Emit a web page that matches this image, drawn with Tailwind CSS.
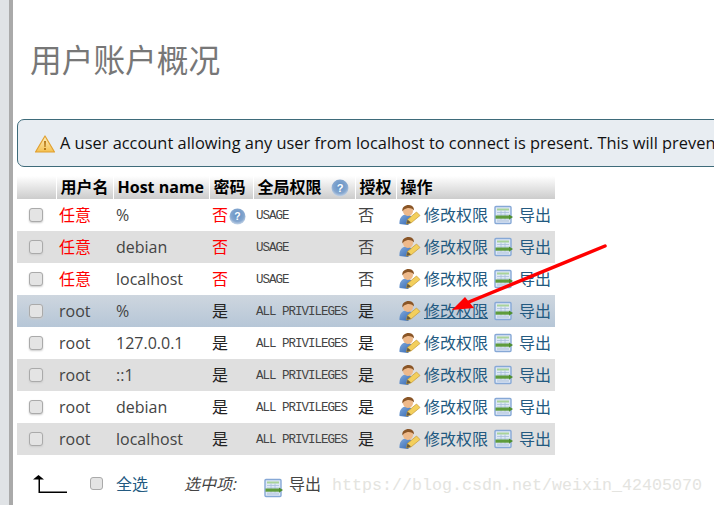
<!DOCTYPE html>
<html lang="zh">
<head>
<meta charset="UTF-8">
<title>用户账户概况</title>
<script src="https://cdn.jsdelivr.net/npm/@tailwindcss/browser@4"></script>
</head>
<body class="bg-white font-['Open_Sans','Noto_Sans_CJK_SC',sans-serif] text-[16px] text-[#444]">
<svg width="0" height="0" class="absolute">
  <defs>
    <radialGradient id="infoFill" cx="0.5" cy="0.4" r="0.6"><stop offset="0" stop-color="#5f8fc4"/><stop offset="0.7" stop-color="#86a7cf"/><stop offset="1" stop-color="#c5d5e8"/></radialGradient>
    <linearGradient id="warnFill" x1="0" y1="0" x2="0" y2="1"><stop offset="0" stop-color="#fdf0c4"/><stop offset="1" stop-color="#f5c04e"/></linearGradient>
    <linearGradient id="bodyFill" x1="0" y1="0" x2="1" y2="1"><stop offset="0" stop-color="#7fa9dc"/><stop offset="1" stop-color="#2f62ad"/></linearGradient>
    <symbol id="editIcon" viewBox="0 0 22 22">
      <path d="M.5 20c-.5-5 2-9.500 6.500-9.500s7 3 7 5l-5 5.500z" fill="url(#bodyFill)"/>
      <circle cx="9" cy="7" r="5" fill="#eeb98a"/>
      <path d="M3.500 7.500C2.500 3 6.500.8 10 1c3.500.3 5.500 2.800 4.800 5.500-1.800-2.200-4.500-2.700-6.800-2.200-1.800.4-3.500 1.200-4.500 3.200z" fill="#8a5526"/>
      <path d="M7.500 20l1-4.500 9-7.500 3.500 3.500-9 7.500z" fill="#f3cf5c" stroke="#c79a35" stroke-width=".7"/>
      <path d="M7.500 20l1-4.500 3.500 3z" fill="#6b5a3a"/>
    </symbol>
    <symbol id="exportIcon" viewBox="0 0 20 20">
      <rect x="1" y="1.500" width="16" height="17" rx="1" fill="#dfe9f6" stroke="#86a8d6" stroke-width="1.400"/>
      <rect x="3" y="3.500" width="12" height="2" fill="#a9d39a"/>
      <path d="M3 7.500h12M3 10h12M7 5.500v10M11 5.500v10" stroke="#a8bfdc" stroke-width=".8" fill="none"/>
      <rect x="1.500" y="10.500" width="13.500" height="3.200" fill="#5f9c3c"/>
      <path d="M15 9.500l4 2.600-4 2.600z" fill="#4f8f30"/>
      <rect x="3" y="14.500" width="12" height="2.400" fill="#c3d2e6"/>
    </symbol>
    <symbol id="infoIcon" viewBox="0 0 18 18">
      <circle cx="9" cy="9" r="8.500" fill="url(#infoFill)"/>
      <text x="9" y="13" text-anchor="middle" font-size="11" font-weight="700" fill="#fff" font-family="Liberation Sans, sans-serif">?</text>
    </symbol>
  </defs>
</svg>

<div class="relative flex w-[714px] h-[505px] overflow-hidden">
  <div class="w-[9px] shrink-0 bg-[#e0e3e6]"></div>
  <div class="w-[4px] shrink-0 bg-[#aaaaaa]"></div>

  <div class="flex-1 min-w-0 pl-[4px]">
    <h1 class="pl-[13px] pt-[40px] h-[119px] text-[31.7px] leading-[40px] font-normal text-[#777777]">用户账户概况</h1>

    <div class="flex items-center gap-[5px] w-[900px] h-[48px] pl-[17px] rounded-[7px] border border-[#3e6b7a] bg-[#e8edf2] text-[#111] whitespace-nowrap text-[16.4px]">
      <svg width="20" height="18" viewBox="0 0 20 18" class="shrink-0 mt-[2px]">
        <path d="M10 1L19.500 17H.5z" fill="url(#warnFill)" stroke="#e0a030" stroke-width="1.200" stroke-linejoin="round"/>
        <path d="M9 6h2l-.4 6h-1.200zM9 13h2v2H9z" fill="#b5791a"/>
      </svg>
      <span>A user account allowing any user from localhost to connect is present. This will preven</span>
    </div>

    <table class="mt-[9px] w-[538px] table-fixed border-collapse text-[16px] leading-[22px]">
      <thead>
        <tr class="h-[23px] bg-gradient-to-b from-white to-[#cccccc] text-black font-bold leading-[20px]">
          <th class="w-[39px] border-r border-white"></th>
          <th class="w-[57px] border-r border-white text-left pl-[4px] pb-[2px] font-bold">用户名</th>
          <th class="w-[96px] border-r border-white text-left pl-[4px] pb-[2px] font-bold">Host name</th>
          <th class="w-[44px] border-r border-white text-left pl-[4px] pb-[2px] font-bold">密码</th>
          <th class="w-[102px] border-r border-white text-left pl-[4px] pb-[2px] font-bold">
            <span class="flex items-center gap-[9px]">全局权限<svg width="18" height="18" class="shrink-0 mt-[2px]"><use href="#infoIcon"/></svg></span>
          </th>
          <th class="w-[41px] border-r border-white text-left pl-[4px] pb-[2px] font-bold">授权</th>
          <th class="text-left pl-[4px] pb-[2px] font-bold">操作</th>
        </tr>
      </thead>
      <tbody>
        <tr class="h-[32px] bg-white">
          <td class="pl-[12px]"><span class="block w-[14px] h-[14px] rounded-[3px] border border-[#aaa] bg-[#e4e4e4] shadow-[0_1px_2px_#ccc]"></span></td>
          <td class="pl-[3px] text-[#ff0000]">任意</td>
          <td class="pl-[3px]">%</td>
          <td class="pl-[3px] text-[#ff0000]"><span class="flex items-center">否<svg width="17" height="17" class="shrink-0 ml-[1px] mt-[2px]"><use href="#infoIcon"/></svg></span></td>
          <td class="pl-[3px] pt-[2px] font-['Liberation_Mono',monospace] text-[12.5px] tracking-[-1px]">USAGE</td>
          <td class="pl-[3px]">否</td>
          <td class="pl-[3px]"><span class="flex items-center text-[#235a81]"><svg width="22" height="22" class="shrink-0"><use href="#editIcon"/></svg><span class="ml-[3px]">修改权限</span><svg width="20" height="20" class="shrink-0 ml-[6px]"><use href="#exportIcon"/></svg><span class="ml-[5px]">导出</span></span></td>
        </tr>
        <tr class="h-[32px] bg-[#dfdfdf]">
          <td class="pl-[12px]"><span class="block w-[14px] h-[14px] rounded-[3px] border border-[#aaa] bg-[#e4e4e4] shadow-[0_1px_2px_#ccc]"></span></td>
          <td class="pl-[3px] text-[#ff0000]">任意</td>
          <td class="pl-[3px]">debian</td>
          <td class="pl-[3px] text-[#ff0000]">否</td>
          <td class="pl-[3px] pt-[2px] font-['Liberation_Mono',monospace] text-[12.5px] tracking-[-1px]">USAGE</td>
          <td class="pl-[3px]">否</td>
          <td class="pl-[3px]"><span class="flex items-center text-[#235a81]"><svg width="22" height="22" class="shrink-0"><use href="#editIcon"/></svg><span class="ml-[3px]">修改权限</span><svg width="20" height="20" class="shrink-0 ml-[6px]"><use href="#exportIcon"/></svg><span class="ml-[5px]">导出</span></span></td>
        </tr>
        <tr class="h-[32px] bg-white">
          <td class="pl-[12px]"><span class="block w-[14px] h-[14px] rounded-[3px] border border-[#aaa] bg-[#e4e4e4] shadow-[0_1px_2px_#ccc]"></span></td>
          <td class="pl-[3px] text-[#ff0000]">任意</td>
          <td class="pl-[3px]">localhost</td>
          <td class="pl-[3px] text-[#ff0000]">否</td>
          <td class="pl-[3px] pt-[2px] font-['Liberation_Mono',monospace] text-[12.5px] tracking-[-1px]">USAGE</td>
          <td class="pl-[3px]">否</td>
          <td class="pl-[3px]"><span class="flex items-center text-[#235a81]"><svg width="22" height="22" class="shrink-0"><use href="#editIcon"/></svg><span class="ml-[3px]">修改权限</span><svg width="20" height="20" class="shrink-0 ml-[6px]"><use href="#exportIcon"/></svg><span class="ml-[5px]">导出</span></span></td>
        </tr>
        <tr class="h-[32px] bg-gradient-to-b from-[#ced6df] to-[#b6c6d7]">
          <td class="pl-[12px]"><span class="block w-[14px] h-[14px] rounded-[3px] border border-[#aaa] bg-[#e4e4e4] shadow-[0_1px_2px_#ccc]"></span></td>
          <td class="pl-[3px]">root</td>
          <td class="pl-[3px]">%</td>
          <td class="pl-[3px] text-[#222]">是</td>
          <td class="pl-[3px] pt-[2px] font-['Liberation_Mono',monospace] text-[12.5px] tracking-[-1px]">ALL PRIVILEGES</td>
          <td class="pl-[3px] text-[#222]">是</td>
          <td class="pl-[3px]"><span class="flex items-center text-[#235a81]"><svg width="22" height="22" class="shrink-0"><use href="#editIcon"/></svg><span class="ml-[3px] underline">修改权限</span><svg width="20" height="20" class="shrink-0 ml-[6px]"><use href="#exportIcon"/></svg><span class="ml-[5px]">导出</span></span></td>
        </tr>
        <tr class="h-[32px] bg-white">
          <td class="pl-[12px]"><span class="block w-[14px] h-[14px] rounded-[3px] border border-[#aaa] bg-[#e4e4e4] shadow-[0_1px_2px_#ccc]"></span></td>
          <td class="pl-[3px]">root</td>
          <td class="pl-[3px]">127.0.0.1</td>
          <td class="pl-[3px] text-[#222]">是</td>
          <td class="pl-[3px] pt-[2px] font-['Liberation_Mono',monospace] text-[12.5px] tracking-[-1px]">ALL PRIVILEGES</td>
          <td class="pl-[3px] text-[#222]">是</td>
          <td class="pl-[3px]"><span class="flex items-center text-[#235a81]"><svg width="22" height="22" class="shrink-0"><use href="#editIcon"/></svg><span class="ml-[3px]">修改权限</span><svg width="20" height="20" class="shrink-0 ml-[6px]"><use href="#exportIcon"/></svg><span class="ml-[5px]">导出</span></span></td>
        </tr>
        <tr class="h-[32px] bg-[#dfdfdf]">
          <td class="pl-[12px]"><span class="block w-[14px] h-[14px] rounded-[3px] border border-[#aaa] bg-[#e4e4e4] shadow-[0_1px_2px_#ccc]"></span></td>
          <td class="pl-[3px]">root</td>
          <td class="pl-[3px]">::1</td>
          <td class="pl-[3px] text-[#222]">是</td>
          <td class="pl-[3px] pt-[2px] font-['Liberation_Mono',monospace] text-[12.5px] tracking-[-1px]">ALL PRIVILEGES</td>
          <td class="pl-[3px] text-[#222]">是</td>
          <td class="pl-[3px]"><span class="flex items-center text-[#235a81]"><svg width="22" height="22" class="shrink-0"><use href="#editIcon"/></svg><span class="ml-[3px]">修改权限</span><svg width="20" height="20" class="shrink-0 ml-[6px]"><use href="#exportIcon"/></svg><span class="ml-[5px]">导出</span></span></td>
        </tr>
        <tr class="h-[32px] bg-white">
          <td class="pl-[12px]"><span class="block w-[14px] h-[14px] rounded-[3px] border border-[#aaa] bg-[#e4e4e4] shadow-[0_1px_2px_#ccc]"></span></td>
          <td class="pl-[3px]">root</td>
          <td class="pl-[3px]">debian</td>
          <td class="pl-[3px] text-[#222]">是</td>
          <td class="pl-[3px] pt-[2px] font-['Liberation_Mono',monospace] text-[12.5px] tracking-[-1px]">ALL PRIVILEGES</td>
          <td class="pl-[3px] text-[#222]">是</td>
          <td class="pl-[3px]"><span class="flex items-center text-[#235a81]"><svg width="22" height="22" class="shrink-0"><use href="#editIcon"/></svg><span class="ml-[3px]">修改权限</span><svg width="20" height="20" class="shrink-0 ml-[6px]"><use href="#exportIcon"/></svg><span class="ml-[5px]">导出</span></span></td>
        </tr>
        <tr class="h-[32px] bg-[#dfdfdf]">
          <td class="pl-[12px]"><span class="block w-[14px] h-[14px] rounded-[3px] border border-[#aaa] bg-[#e4e4e4] shadow-[0_1px_2px_#ccc]"></span></td>
          <td class="pl-[3px]">root</td>
          <td class="pl-[3px]">localhost</td>
          <td class="pl-[3px] text-[#222]">是</td>
          <td class="pl-[3px] pt-[2px] font-['Liberation_Mono',monospace] text-[12.5px] tracking-[-1px]">ALL PRIVILEGES</td>
          <td class="pl-[3px] text-[#222]">是</td>
          <td class="pl-[3px]"><span class="flex items-center text-[#235a81]"><svg width="22" height="22" class="shrink-0"><use href="#editIcon"/></svg><span class="ml-[3px]">修改权限</span><svg width="20" height="20" class="shrink-0 ml-[6px]"><use href="#exportIcon"/></svg><span class="ml-[5px]">导出</span></span></td>
        </tr>
      </tbody>
    </table>

    <div class="flex items-center h-[24px] mt-[17px] whitespace-nowrap text-[16px]">
      <svg width="34" height="18" viewBox="0 0 34 18" class="ml-[16px] shrink-0"><path d="M0 4.500L5.500 0 11 4.500H7V16.500H34V18H5.500V4.500z" fill="#000"/></svg>
      <span class="block w-[13px] h-[13px] ml-[23px] mb-[2px] rounded-[3px] border border-[#aaa] bg-[#e4e4e4]"></span>
      <span class="ml-[13px] text-[#235a81]">全选</span>
      <span class="ml-[36px] italic">选中项<span class="ml-[1px]">:</span></span>
      <svg width="20" height="20" class="ml-[27px] mt-[7px] shrink-0"><use href="#exportIcon"/></svg>
      <span class="ml-[5px]">导出</span>
      <span class="ml-[11px] mt-[3px] font-['Liberation_Mono',monospace] text-[16.67px] text-[#e4e4e0]">https://blog.csdn.net/weixin_42405070</span>
    </div>
  </div>

  <svg width="714" height="505" class="absolute left-0 top-0 pointer-events-none">
    <path d="M605 246L464 304" stroke="#ff0000" stroke-width="3.500" stroke-linecap="round"/>
    <path d="M452 310L465 297L474 308z" fill="#ff0000"/>
  </svg>
</div>
</body>
</html>
